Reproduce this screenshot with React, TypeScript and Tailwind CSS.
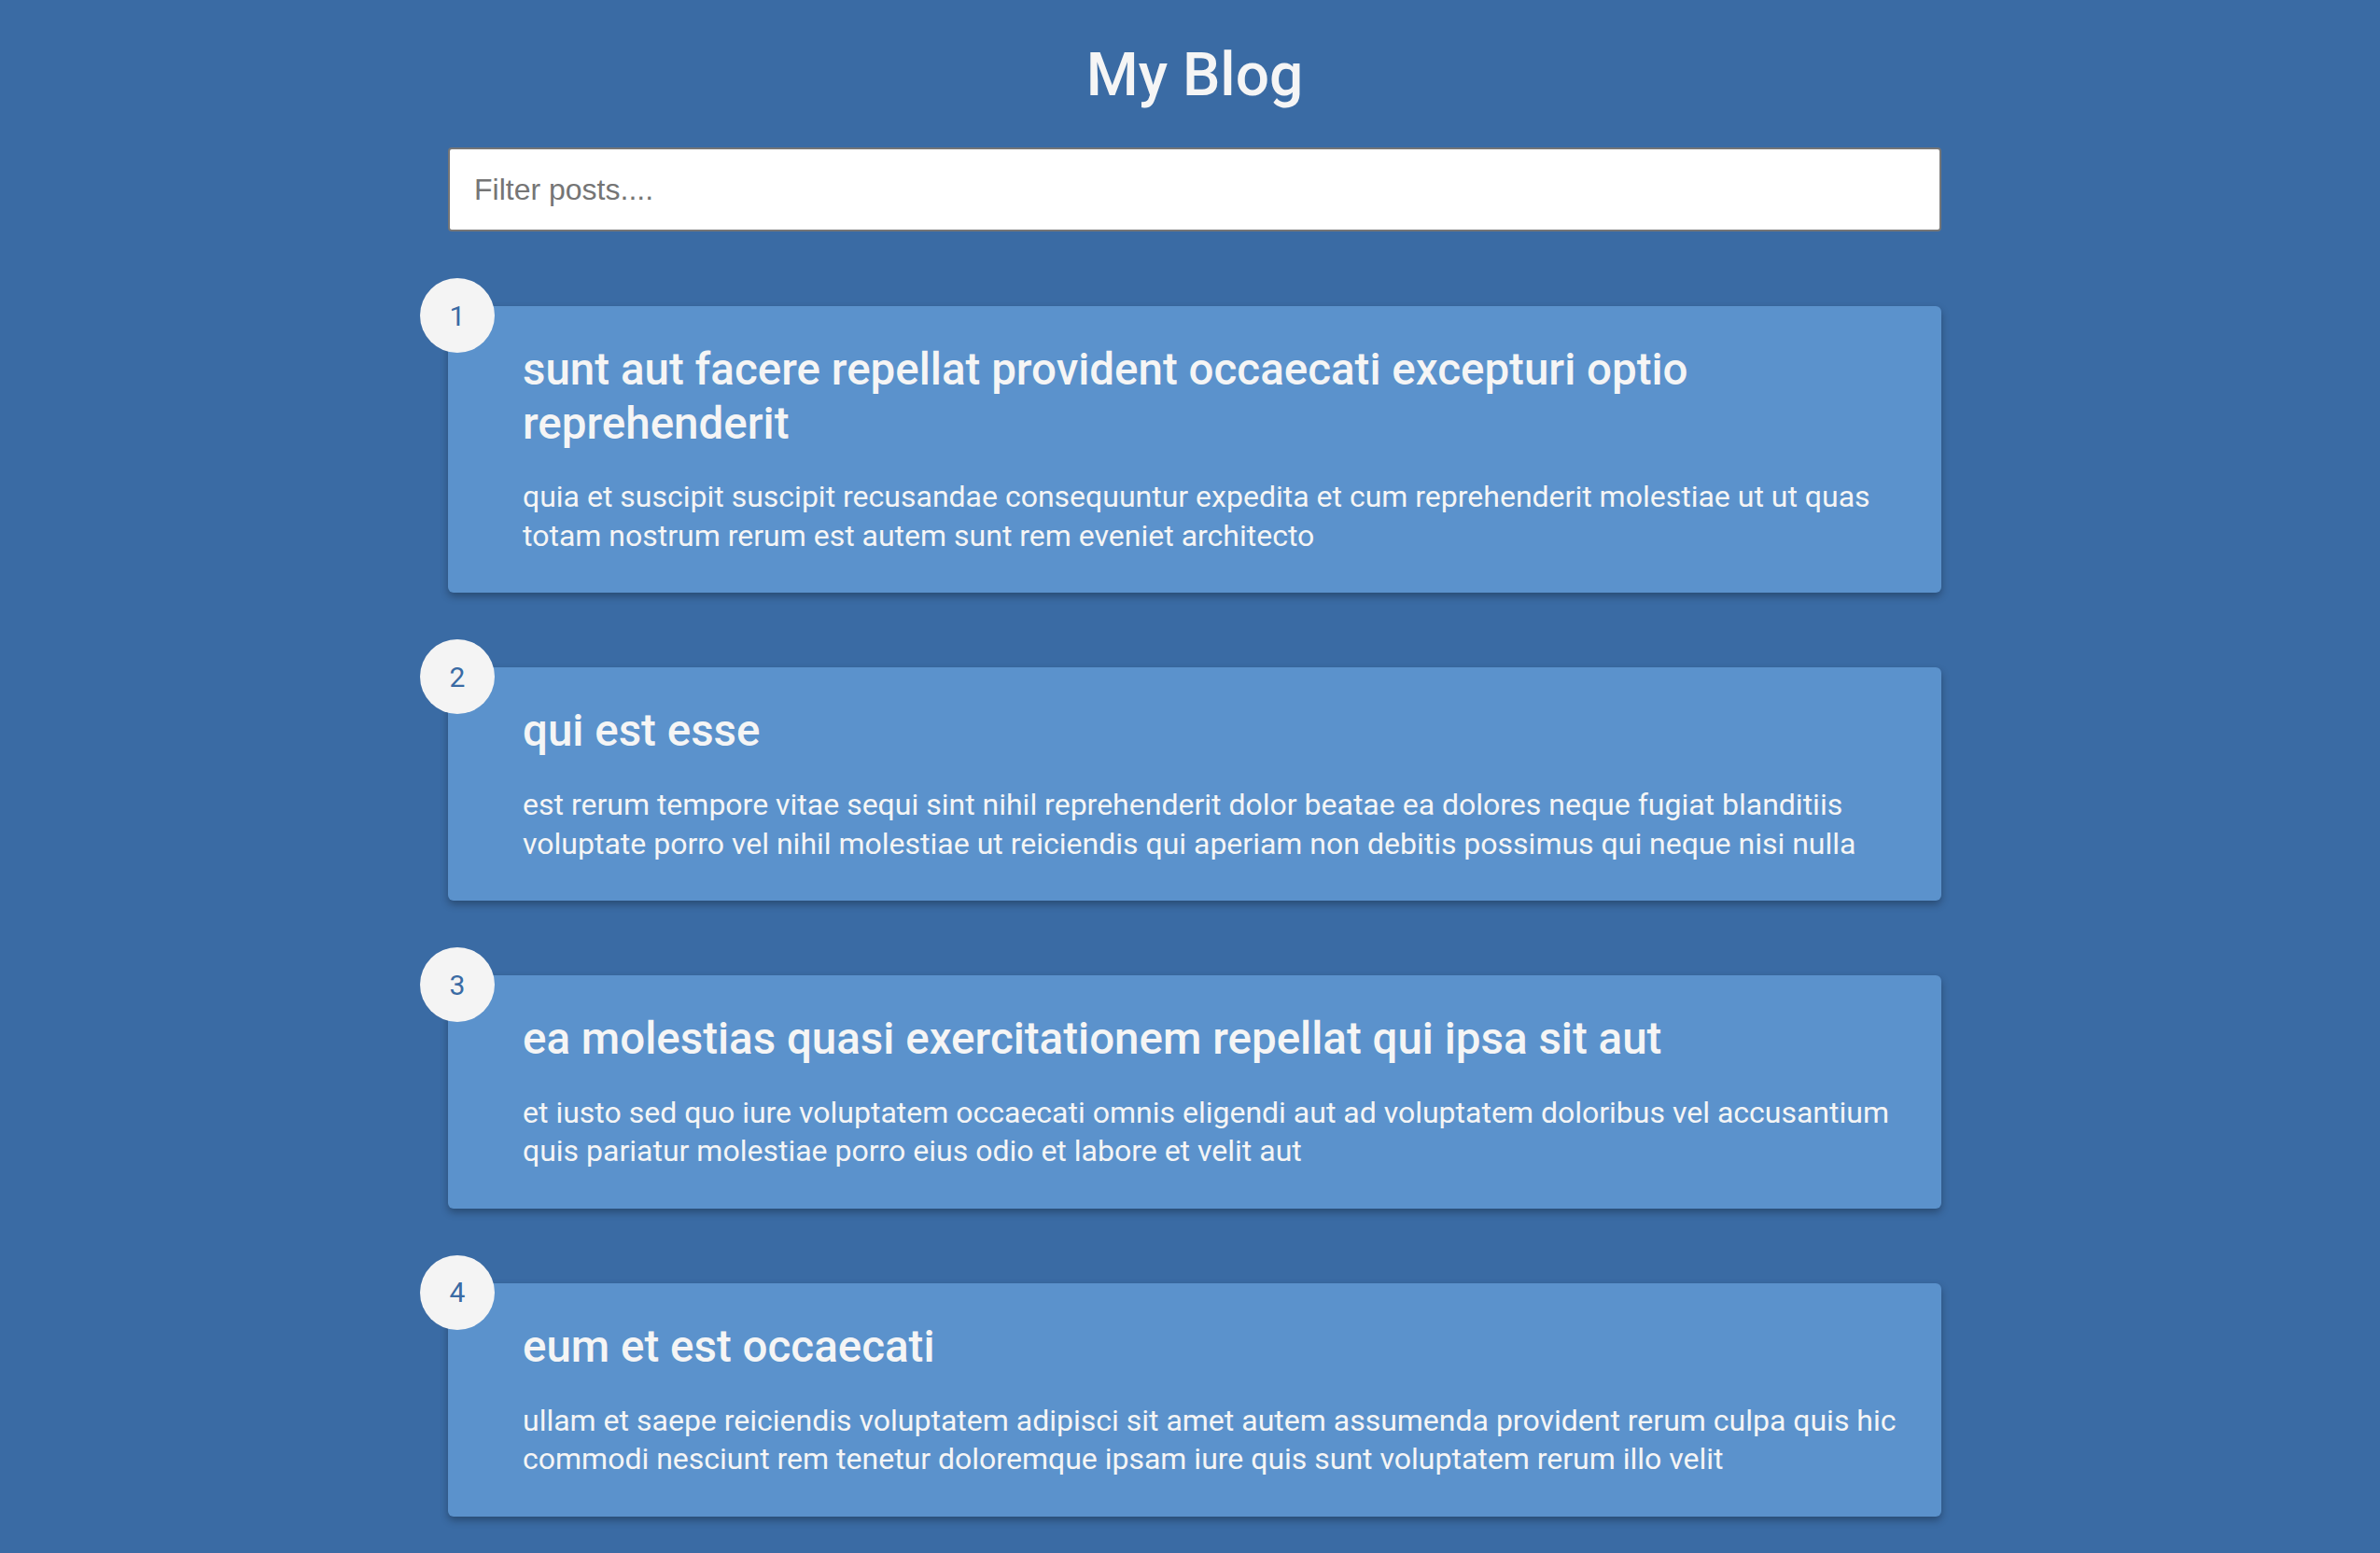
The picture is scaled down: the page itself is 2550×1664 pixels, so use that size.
const posts = [
  {
    id: 1,
    title: "sunt aut facere repellat provident occaecati excepturi optio reprehenderit",
    body: "quia et suscipit suscipit recusandae consequuntur expedita et cum reprehenderit molestiae ut ut quas totam nostrum rerum est autem sunt rem eveniet architecto",
  },
  {
    id: 2,
    title: "qui est esse",
    body: "est rerum tempore vitae sequi sint nihil reprehenderit dolor beatae ea dolores neque fugiat blanditiis voluptate porro vel nihil molestiae ut reiciendis qui aperiam non debitis possimus qui neque nisi nulla",
  },
  {
    id: 3,
    title: "ea molestias quasi exercitationem repellat qui ipsa sit aut",
    body: "et iusto sed quo iure voluptatem occaecati omnis eligendi aut ad voluptatem doloribus vel accusantium quis pariatur molestiae porro eius odio et labore et velit aut",
  },
  {
    id: 4,
    title: "eum et est occaecati",
    body: "ullam et saepe reiciendis voluptatem adipisci sit amet autem assumenda provident rerum culpa quis hic commodi nesciunt rem tenetur doloremque ipsam iure quis sunt voluptatem rerum illo velit",
  },
];

export default function App() {
  return (
    <div className="min-h-screen bg-[#3a6ba4] font-['Roboto',sans-serif] text-[#f5f5f5] pl-[10px] pb-[40px] flex flex-col items-center">
      <h1 className="text-[64px] leading-[75px] font-medium mt-[43px] mb-[40px]">My Blog</h1>

      <input
        type="text"
        placeholder="Filter posts...."
        className="w-[1600px] h-[90px] bg-white border-2 border-[#767676] rounded-[4px] px-[26px] text-[32px] font-['Liberation_Sans',Arial,sans-serif] text-[#333] placeholder:text-[#757575] outline-none"
      />

      <div className="w-[1600px] mt-[80px] flex flex-col gap-[80px]">
        {posts.map((post) => (
          <div
            key={post.id}
            className="relative bg-[#5b92cc] rounded-[6px] shadow-[0_4px_8px_rgba(0,0,0,0.3)] p-[40px] pl-[80px]"
          >
            <div className="absolute -top-[30px] -left-[30px] size-[80px] rounded-full bg-[#f4f4f4] text-[#3a6ba4] text-[30px] flex items-center justify-center">
              {post.id}
            </div>
            <h2 className="text-[47.5px] leading-[57.6px] font-medium">{post.title}</h2>
            <p className="text-[32px] leading-[41.6px] mt-[29px]">{post.body}</p>
          </div>
        ))}
      </div>
    </div>
  );
}
